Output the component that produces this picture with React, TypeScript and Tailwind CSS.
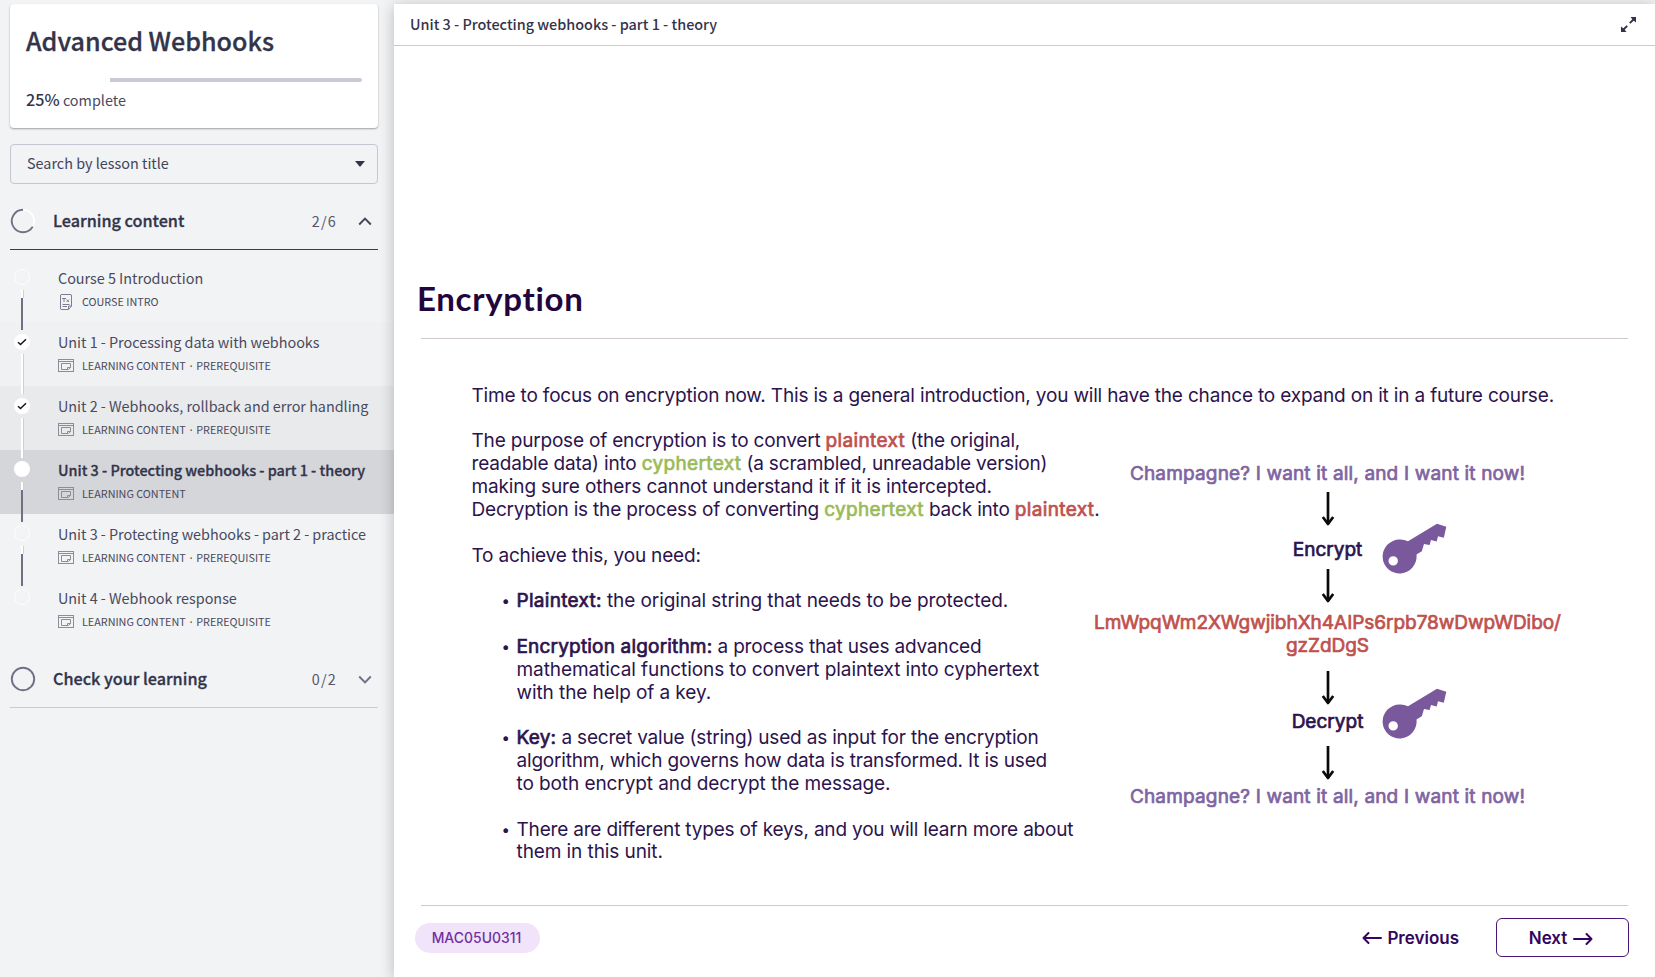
import React from "react";

const ui = "font-['Noto_Sans_CJK_SC',sans-serif]";
const semi = "font-medium [-webkit-text-stroke:0.3px_currentColor]";

function Arrow() {
  return (
    <svg className="shrink-0" width="14" height="36" viewBox="0 0 14 36" fill="none" stroke="#0a0a0a" strokeWidth="2.700" strokeLinejoin="round" strokeLinecap="butt">
      <path d="M7 1V33" />
      <path d="M1.800 26L7 33L12.200 26" />
    </svg>
  );
}

function Key({ className }: { className: string }) {
  return (
    <svg className={className} width="66" height="52" viewBox="0 0 66 52">
      <path
        fill="#79589c"
        fillRule="evenodd"
        d="M17.500 16.500a17 17 0 0 1 8.500 1.800L55 .8l9.300 3-2.500 10.900-5.800-1.500-1.300 5.300-5.700-1.400-1.400 5-5.600-1-2.200 7.200-5.300 3.300a17 17 0 1 1-17-15.100zM11.200 33.200a4.700 4.700 0 1 0 .01 9.400a4.700 4.700 0 1 0-.01-9.400z"
      />
    </svg>
  );
}

function WindowIcon() {
  return (
    <svg width="16" height="13" viewBox="0 0 16 13" fill="none" stroke="#8b8c9d">
      <rect x=".5" y=".5" width="15" height="12" />
      <path d="M.5 2.500H15.500M12.500 8.500V4.500H3.500V10.500H10.500L12.500 8.500H9.500V10.500" />
    </svg>
  );
}

function DocIcon() {
  return (
    <svg width="14" height="16" viewBox="0 0 14 16" fill="none" stroke="#7b7d91">
      <path d="M2 .5H12L12.500 1V12L9.500 15.500H2L1.500 15V1ZM12.500 12H9.500V15.500M3 4.500H7M5 4.500V8M7.500 5.500L10 8M10 5.500L7.500 8M3.500 10.500H10.500M3.500 12.500H8" />
    </svg>
  );
}

type Item = { title: string; meta: string; prerequisite?: boolean; state: "open" | "done" | "current"; doc?: boolean };
const items: Item[] = [
  { title: "Course 5 Introduction", meta: "COURSE INTRO", state: "open", doc: true },
  { title: "Unit 1 - Processing data with webhooks", meta: "LEARNING CONTENT", prerequisite: true, state: "done" },
  { title: "Unit 2 - Webhooks, rollback and error handling", meta: "LEARNING CONTENT", prerequisite: true, state: "done" },
  { title: "Unit 3 - Protecting webhooks - part 1 - theory", meta: "LEARNING CONTENT", state: "current" },
  { title: "Unit 3 - Protecting webhooks - part 2 - practice", meta: "LEARNING CONTENT", prerequisite: true, state: "open" },
  { title: "Unit 4 - Webhook response", meta: "LEARNING CONTENT", prerequisite: true, state: "open" },
];

function Line({ done, className }: { done: boolean; className: string }) {
  return <div className={`${done ? "w-[3px] border-r border-[#cfd0d6] bg-white" : "w-[2px] bg-[#6e7083]"} ${className}`} />;
}

function Row({ item, index }: { item: Item; index: number }) {
  const prev = items[index - 1];
  const last = index === items.length - 1;
  const bg = item.state === "current" ? "bg-[#d5d6da]" : index === 2 ? "bg-[#e9eaec]" : index === 1 ? "bg-[#f0f1f3]" : "";
  return (
    <div className={`flex h-16 ${bg}`}>
      <div className="ml-3.5 flex w-4 shrink-0 flex-col items-center">
        {prev ? <Line done={prev.state === "done"} className="h-2" /> : <div className="h-2" />}
        <div className={`flex h-4 w-4 shrink-0 items-center justify-center rounded-full ${item.state === "done" ? "mt-1 bg-white" : item.state === "current" ? "mt-[3px] mb-px bg-white" : "mt-[3px] mb-px border border-white"}`}>
          {item.state === "done" && (
            <svg width="10" height="8" viewBox="0 0 10 8" fill="none" stroke="#15151d" strokeWidth="1.500"><path d="M1 4.300L3.500 6.500L9 1.200" /></svg>
          )}
        </div>
        {!last && (
          <>
            <div className="mt-1 h-2 w-[3px] shrink-0 border-r border-[#cfd0d6] bg-white" />
            <Line done={item.state === "done"} className="flex-1" />
          </>
        )}
      </div>
      <div className="ml-7 pt-2">
        <div className={`h-6 whitespace-nowrap text-[14.4px] leading-6 ${item.state === "current" ? `${semi} text-[#33344a]` : "tracking-[-0.02px] text-[#494a5e]"}`}>{item.title}</div>
        <div className="flex h-[23px] items-center">
          <span className="flex w-4 justify-center">{item.doc ? <DocIcon /> : <WindowIcon />}</span>
          <span className="-mt-px ml-2 text-[10.8px] leading-4 text-[#494a5e]">{item.meta}</span>
          {item.prerequisite && (
            <>
              <span className="mt-0.5 w-[10.500px] text-center font-['Open_Sans',sans-serif] text-[12px] leading-4 text-[#494a5e]">·</span>
              <span className="-mt-px text-[10.8px] leading-4 text-[#494a5e]">PREREQUISITE</span>
            </>
          )}
        </div>
      </div>
    </div>
  );
}

function Sidebar() {
  return (
    <aside className={`${ui} w-[394px] shrink-0 pt-1 text-[#33344a]`}>
      <div className="ml-2.5 h-[124px] w-[368px] rounded-[4px] bg-white px-4 shadow-[0_1px_2px_rgba(0,0,0,0.35)]">
        <h1 className={`h-[55px] pt-[17px] text-[25.1px] leading-[38px] ${semi}`}>Advanced Webhooks</h1>
        <div className="mt-[19px] ml-[84px] h-1 rounded-r-full bg-[#c9cad6]" />
        <p className="mt-[5px] text-[14.4px] leading-6 text-[#494a5e]"><span className="text-[16.2px] font-medium text-[#33344a]">25%</span> complete</p>
      </div>
      <div className="mt-4 ml-2.5 flex h-10 w-[368px] items-center justify-between rounded-[4px] border border-[#c5c6d2] pr-3 pl-4 text-[14.4px] text-[#43445a]">
        <span className="-mt-0.5">Search by lesson title</span>
        <svg width="10" height="6" viewBox="0 0 10 6"><path d="M0 0H10L5 6Z" fill="#33344a" /></svg>
      </div>
      <div className="mt-[9px] ml-2.5 flex h-[57px] w-[368px] items-center border-b border-[#3a3b50]">
        <svg width="26" height="26" viewBox="0 0 26 26" fill="none" strokeWidth="1.600">
          <circle cx="13" cy="13" r="11.200" stroke="#fff" />
          <path d="M13 1.800A11.200 11.200 0 1 0 22.700 18.600" stroke="#6e7083" strokeWidth="1.900" />
        </svg>
        <span className={`-mt-0.5 ml-[17px] text-[16.2px] ${semi}`}>Learning content</span>
        <span className="ml-auto text-[14.4px] tracking-[1.200px] text-[#555669]">2/6</span>
        <svg className="mr-[6px] ml-[21px]" width="14" height="9" viewBox="0 0 14 9" fill="none" stroke="#43445a" strokeWidth="1.900"><path d="M1.200 7.500L7 1.700L12.800 7.500" /></svg>
      </div>
      <div className="pt-2">{items.map((it, i) => <Row key={it.title} item={it} index={i} />)}</div>
      <div className="mt-[9px] ml-2.5 flex h-[57px] w-[368px] items-center border-b border-[#c9cad6]">
        <svg width="26" height="26" viewBox="0 0 26 26" fill="none"><circle cx="13" cy="13" r="11.200" stroke="#6e7083" strokeWidth="1.900" /></svg>
        <span className={`-mt-0.5 ml-[17px] text-[16.2px] ${semi}`}>Check your learning</span>
        <span className="ml-auto text-[14.4px] tracking-[1.200px] text-[#555669]">0/2</span>
        <svg className="mr-[6px] ml-[21px]" width="14" height="9" viewBox="0 0 14 9" fill="none" stroke="#6e7083" strokeWidth="1.900"><path d="M1.200 1.500L7 7.300L12.800 1.500" /></svg>
      </div>
    </aside>
  );
}

function B({ c = "tracking-[0.17px]", children }: { c?: string; children: React.ReactNode }) {
  return <span className={`[-webkit-text-stroke:0.7px_currentColor] ${c}`}>{children}</span>;
}

const red = "text-[#c0504d]";
const redWord = "tracking-[0.33px] text-[#c0504d]";
const greenWord = "tracking-[0.33px] text-[#9bbb59]";

function Bullet({ lines }: { lines: React.ReactNode[] }) {
  return (
    <li className="mt-[22.850px] flex">
      <span className="w-[15px] shrink-0 text-[15px]">•</span>
      <div>{lines.map((l, i) => <div key={i}>{l}</div>)}</div>
    </li>
  );
}

function Slide() {
  return (
    <section className="flex-1 pl-6 font-['Inter',sans-serif] text-[#2c134d]">
      <h2 className="mt-[229px] -ml-px h-[46px] font-['Lato',sans-serif] text-[33px] leading-[46px] font-bold tracking-[0.700px] text-[#22053c]">Encryption</h2>
      <div className="mt-[17px] ml-[3px] h-px w-[1207px] bg-[#cfc8cb]" />
      <div className="mt-[45.600px] ml-[53.500px] flex h-[520.400px] text-[19.040px] leading-[22.850px] whitespace-nowrap">
        <div className="w-[631px] shrink-0 tracking-[-0.2px]">
          <p className="tracking-[-0.186px]">Time to focus on encryption now. This is a general introduction, you will have the chance to expand on it in a future course.</p>
          <p className="mt-[22.850px]">The purpose of encryption is to convert <B c={redWord}>plaintext</B> (the original,</p>
          <p>readable data) into <B c={greenWord}>cyphertext</B> (a scrambled, unreadable version)</p>
          <p className="tracking-[-0.155px]">making sure others cannot understand it if it is intercepted.</p>
          <p>Decryption is the process of converting <B c={greenWord}>cyphertext</B> back into <B c={redWord}>plaintext</B>.</p>
          <p className="mt-[22.850px]">To achieve this, you need:</p>
          <ul className="ml-[30px]">
            <Bullet lines={[<span className="tracking-[-0.09px]"><B c="tracking-[0.27px]">Plaintext:</B> the original string that needs to be protected.</span>]} />
            <Bullet lines={[<><B>Encryption algorithm:</B> a process that uses advanced</>, <span className="tracking-[-0.1px]">mathematical functions to convert plaintext into cyphertext</span>, <span className="tracking-[-0.1px]">with the help of a key.</span>]} />
            <Bullet lines={[<><B c="tracking-[0.2px]">Key:</B> a secret value (string) used as input for the encryption</>, "algorithm, which governs how data is transformed. It is used", <span className="tracking-[-0.1px]">to both encrypt and decrypt the message.</span>]} />
            <Bullet lines={["There are different types of keys, and you will learn more about", <span className="tracking-[-0.1px]">them in this unit.</span>]} />
          </ul>
        </div>
        <div className="flex w-[450px] shrink-0 flex-col items-center pt-[78.400px]">
          <B c="tracking-[0.15px] text-[#8064a2]">Champagne? I want it all, and I want it now!</B>
          <div className="mt-[5px]"><Arrow /></div>
          <div className="flex h-[41.500px] items-start"><span className="mt-[12px]"><B c="">Encrypt</B></span><span className="w-0"><Key className="-mt-1 ml-[20px]" /></span></div>
          <Arrow />
          <div className={`mt-2 text-center ${red}`}><B c="tracking-[-0.05px]">LmWpqWm2XWgwjibhXh4AIPs6rpb78wDwpWDibo/<br />gzZdDgS</B></div>
          <div className="mt-3"><Arrow /></div>
          <div className="flex h-[39px] items-start"><span className="mt-[5px]"><B c="">Decrypt</B></span><span className="w-0"><Key className="-mt-[18px] ml-[19px]" /></span></div>
          <Arrow />
          <div className="mt-[5px]"><B c="tracking-[0.15px] text-[#8064a2]">Champagne? I want it all, and I want it now!</B></div>
        </div>
      </div>
      <div className="ml-[3px] h-px w-[1207px] bg-[#cfc8cb]" />
      <div className="mt-3 flex h-10 items-center">
        <div className="-ml-[3px] flex h-[30px] w-[125px] items-center justify-center rounded-full bg-[#f0e3fa] pr-0.5 text-[13.900px] font-medium tracking-[0.050px] text-[#7030a0]">MAC05U0311</div>
        <button className="ml-auto flex items-center gap-[5px] pt-px text-[17px] font-semibold text-[#33055e]">
          <svg width="20" height="14" viewBox="0 0 20 14" fill="none" stroke="currentColor" strokeWidth="2" strokeLinecap="round" strokeLinejoin="round"><path d="M19 7H1.500M6.500 2L1.500 7L6.500 12" /></svg>
          Previous
        </button>
        <button className="mr-[26px] ml-[37px] flex h-[39px] w-[133px] items-center justify-center gap-[6px] rounded-[6px] border-[1.500px] border-[#4a1575] pt-0.5 pr-[3px] text-[17px] font-semibold text-[#33055e]">
          Next
          <svg width="20" height="14" viewBox="0 0 20 14" fill="none" stroke="currentColor" strokeWidth="2" strokeLinecap="round" strokeLinejoin="round"><path d="M1 7H18.500M13.500 2L18.500 7L13.500 12" /></svg>
        </button>
      </div>
    </section>
  );
}

export default function App() {
  return (
    <div className="flex h-[977px] w-[1655px] overflow-hidden bg-[#f1f3f5]">
      <Sidebar />
      <main className="relative mt-1 flex flex-1 flex-col bg-white shadow-[0_2px_14px_rgba(0,0,0,0.240)]">
        <header className={`${ui} flex h-[42px] shrink-0 items-center justify-between border-b border-[#c9cad6] pr-[18px] pl-4 text-[14.4px] font-medium text-[#33344a]`}>
          <span className="-mt-0.5">Unit 3 - Protecting webhooks - part 1 - theory</span>
          <svg width="17" height="17" viewBox="0 0 17 17" fill="none" stroke="#33344a" strokeWidth="1.900">
            <path d="M15 2L9.800 7.200M2 15L7.200 9.800" />
            <path d="M10.500 1H16V6.500L13.500 4.500L12.500 3.500ZM6.500 16H1V10.500L3.500 12.500L4.500 13.500Z" fill="#33344a" stroke="none" />
          </svg>
        </header>
        <Slide />
      </main>
    </div>
  );
}
